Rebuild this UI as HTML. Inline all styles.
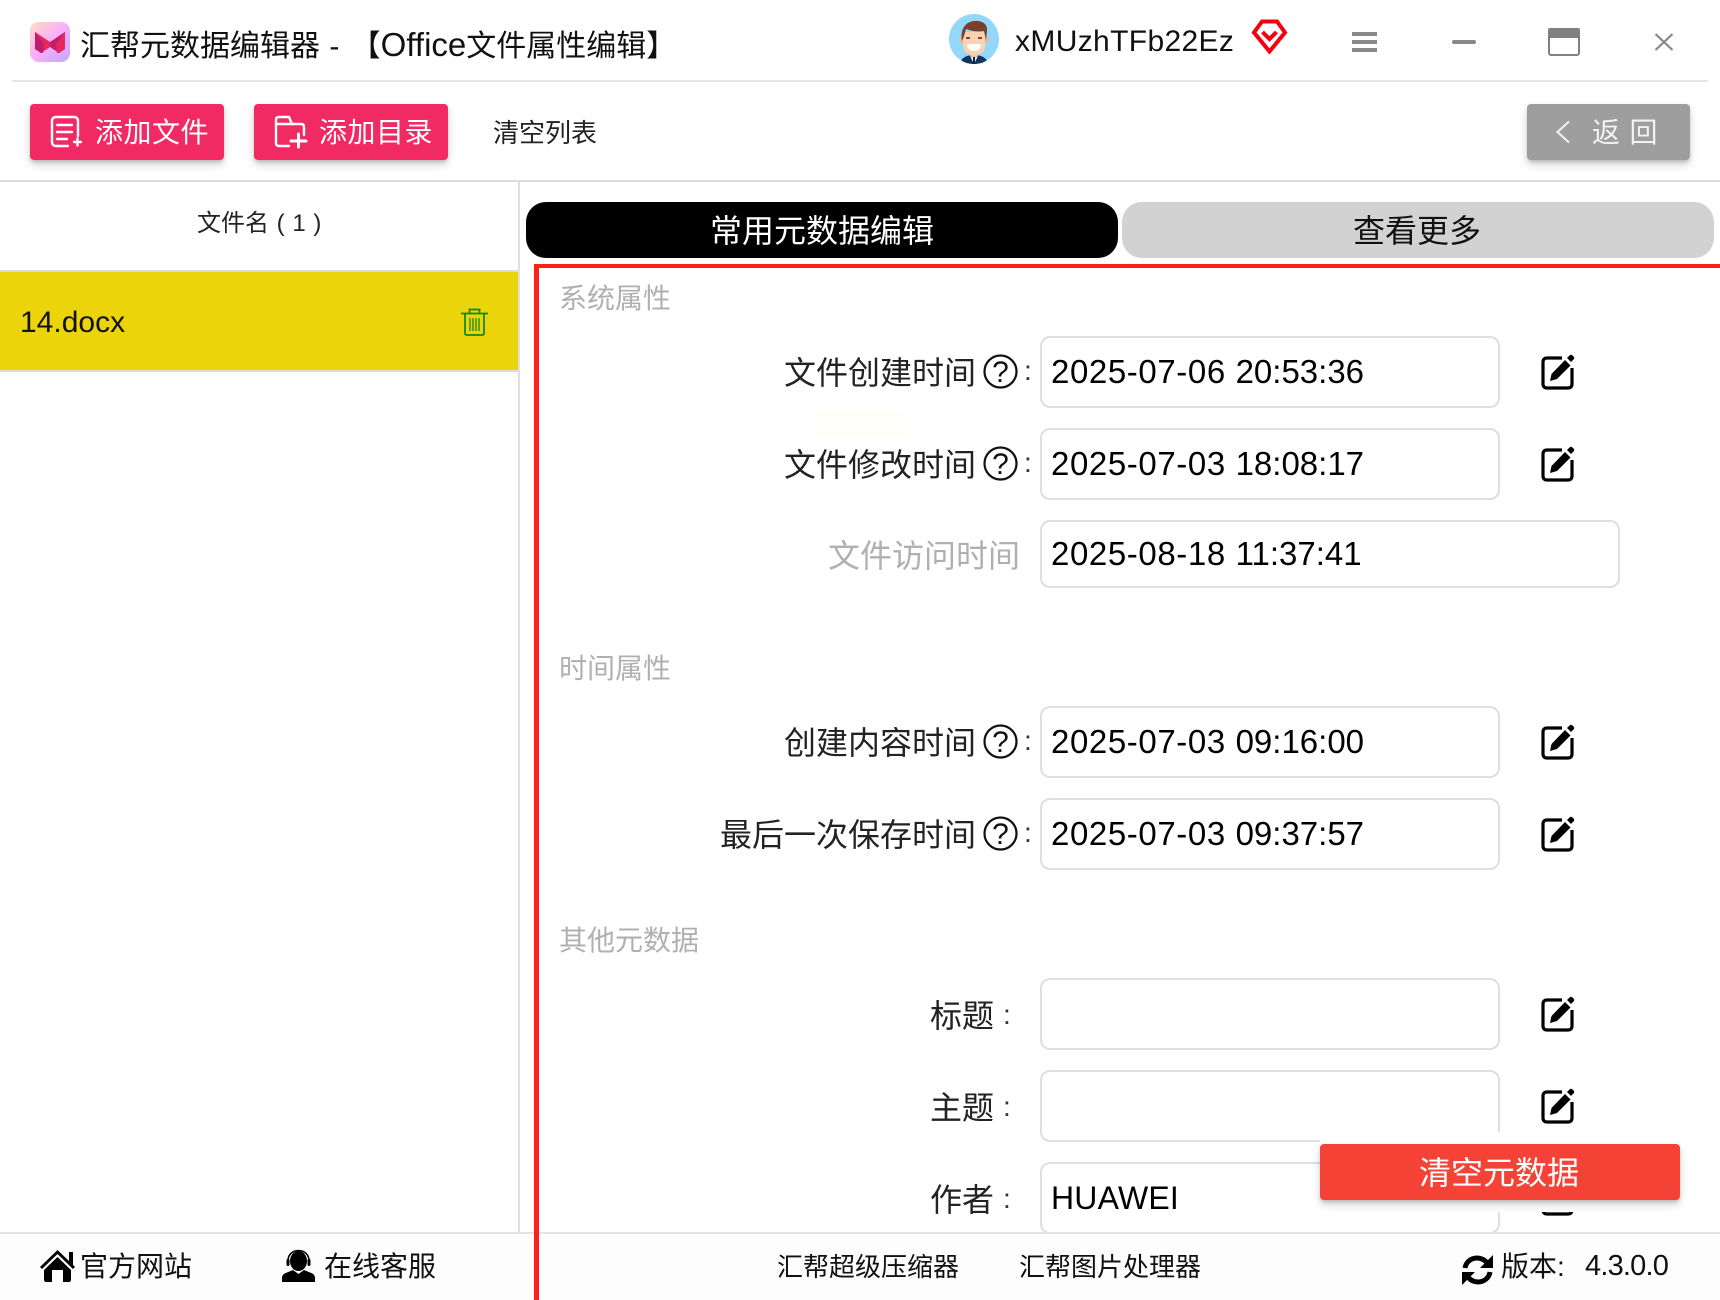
<!DOCTYPE html>
<html lang="zh-CN"><head><meta charset="utf-8"><title>汇帮元数据编辑器</title>
<style>
html,body{margin:0;padding:0;background:#fff}
#app{position:relative;width:1720px;height:1300px;overflow:hidden;background:#fff;font-family:"Liberation Sans","Noto Sans CJK SC",sans-serif;color:#111}
.a{position:absolute}
.t{position:absolute;white-space:nowrap;line-height:40px;height:40px}
.btn{position:absolute;top:104px;height:56px;border-radius:4px;background:#f22a63;box-shadow:0 3px 5px -1px rgba(0,0,0,.2),0 5px 10px rgba(0,0,0,.14)}
.inp{position:absolute;left:1040px;width:460px;height:72px;box-sizing:border-box;border:2px solid #dcdfe6;border-radius:10px;background:#fff}
.val{position:absolute;left:1051px;white-space:nowrap;font-size:33px;letter-spacing:.6px;line-height:40px;height:40px;color:#000}
.val span{letter-spacing:0}
.lab{position:absolute;right:744px;white-space:nowrap;font-size:32px;line-height:44px;height:44px;color:#222}
.sec{position:absolute;left:559px;font-size:28px;line-height:40px;height:40px;color:#b0b0b0;white-space:nowrap}
.colon{position:absolute;left:1024px;font-size:28px;line-height:40px;height:40px;color:#333}
svg{position:absolute;overflow:visible}
</style></head><body><div id="app">

<!-- title bar -->
<svg style="left:30px;top:22px" width="40" height="40" viewBox="0 0 40 40">
<defs><linearGradient id="lg" x1="0" y1="0" x2="1" y2="1"><stop offset="0" stop-color="#ffdcc4"/><stop offset=".5" stop-color="#f9aefa"/><stop offset="1" stop-color="#bfaaff"/></linearGradient></defs>
<rect width="40" height="40" rx="9" fill="url(#lg)"/>
<path d="M5 10l15 10v5l-9 6-6-4z" fill="#e8265f"/><path d="M35 10l-15 10v5l9 6 6-4z" fill="#c01e6a"/>
<path d="M5 10l9 12-1 9-2 0-6-4z" fill="#c01e6a"/><path d="M35 10l-9 12 1 9 2 0 6-4z" fill="#e8265f"/>
</svg>
<div class="t" style="left:80px;top:25px;font-size:30px;color:#111;word-spacing:1px">汇帮元数据编辑器 - <span style="margin-left:2px">【</span><span style="font-size:33px">Office</span>文件属性编辑】</div>

<svg style="left:949px;top:14px" width="50" height="50" viewBox="0 0 50 50">
<clipPath id="c"><circle cx="25" cy="25" r="25"/></clipPath>
<circle cx="25" cy="25" r="25" fill="#93d8fb"/>
<g clip-path="url(#c)">
<path d="M11 50c1-6 6-9 14-9s13 3 14 9z" fill="#12335a"/>
<path d="M20 41l5 3 5-3-2-7h-6z" fill="#f7c7a6"/><path d="M21 42l4 8 4-8-4 2z" fill="#fff"/><rect x="24" y="43" width="2" height="8" fill="#10233e"/>
<circle cx="13" cy="26" r="3" fill="#f1b48e"/><circle cx="37" cy="26" r="3" fill="#f1b48e"/>
<path d="M14 18h22v14c0 6-5 9-11 9s-11-3-11-9z" fill="#fbd2b3"/>
<path d="M13 27c-2-10 2-19 12-20 9-1 14 4 13 10l-1 9-2-9c-6 1-13 0-18-2-1 4-2 8-4 12z" fill="#7b3f2a"/>
<path d="M18 30h14c0 5-3 7-7 7s-7-2-7-7z" fill="#fff"/>
<rect x="17" y="23" width="4" height="2" fill="#7a4a36"/><rect x="29" y="23" width="4" height="2" fill="#7a4a36"/>
</g></svg>
<div class="t" style="left:1015px;top:22px;font-size:30px;letter-spacing:.35px;color:#111">xMUzhTFb22Ez</div>
<svg style="left:1252px;top:19px" width="35" height="35" viewBox="0 0 35 35" fill="none" stroke="#f4000e" stroke-width="4">
<path d="M10 2.500h15l8 11-15.500 19L2 13.500z"/><path d="M10.500 13l7 7 7-7" stroke-width="4"/></svg>

<svg style="left:1352px;top:32px" width="25" height="20"><rect width="25" height="4" fill="#888"/><rect y="8" width="25" height="4" fill="#888"/><rect y="16" width="25" height="4" fill="#888"/></svg>
<svg style="left:1452px;top:40px" width="24" height="4"><rect width="24" height="4" rx="2" fill="#888"/></svg>
<svg style="left:1548px;top:28px" width="32" height="28"><rect x="1" y="1" width="30" height="26" rx="2" fill="#fff" stroke="#808080" stroke-width="2"/><rect width="32" height="10" rx="2" fill="#808080"/></svg>
<svg style="left:1654px;top:33px" width="20" height="18" fill="none" stroke="#888" stroke-width="2.200"><path d="M1.500 1l17 16M18.500 1l-17 16"/></svg>

<div class="a" style="left:12px;top:80px;width:1696px;height:2px;background:#e6e6e6"></div>

<!-- toolbar -->
<div class="btn" style="left:30px;width:194px"></div>
<svg style="left:50px;top:116px" width="32" height="32" viewBox="0 0 32 32" fill="none" stroke="#fff" stroke-width="2.400" stroke-linecap="round">
<path d="M18 30H6c-2.500 0-4-1.500-4-4V5c0-2.500 1.500-4 4-4h18c2.500 0 4 1.500 4 4v15"/><path d="M7 9h15M7 16h15M7 23h10"/><path d="M24 26h7M27.500 22.500v7"/></svg>
<div class="t" style="left:95px;top:113px;font-size:28px;letter-spacing:.5px;color:#fff">添加文件</div>
<div class="btn" style="left:254px;width:194px"></div>
<svg style="left:274px;top:116px" width="33" height="32" viewBox="0 0 33 32" fill="none" stroke="#fff" stroke-width="2.400" stroke-linecap="round">
<path d="M15 30H5c-2 0-3-1-3-3V4c0-2 1-3 3-3h10l3 7h9c2 0 3 1 3 3v8"/><path d="M2 8h16"/><path d="M17 25h15M24.500 18v13" stroke-width="3"/></svg>
<div class="t" style="left:319px;top:113px;font-size:28px;letter-spacing:.5px;color:#fff">添加目录</div>
<div class="t" style="left:493px;top:113px;font-size:26px;color:#222">清空列表</div>

<div class="btn" style="left:1527px;width:163px;background:#9e9e9e"></div>
<svg style="left:1555px;top:120px" width="16" height="24" fill="none" stroke="#eee" stroke-width="2.200"><path d="M14 1.500L2.500 12 14 22.500"/></svg>
<div class="t" style="left:1592px;top:113px;font-size:28px;letter-spacing:9.500px;color:#f2f2f2">返回</div>

<div class="a" style="left:0;top:180px;width:1720px;height:2px;background:#dcdcdc"></div>

<!-- left panel -->
<div class="a" style="left:518px;top:182px;width:2px;height:1050px;background:#e0e0e0"></div>
<div class="t" style="left:197px;top:204px;font-size:24px;word-spacing:1px;color:#222">文件名 ( 1 )</div>
<div class="a" style="left:0;top:270px;width:518px;height:102px;box-sizing:border-box;border-top:2px solid #dcdcdc;border-bottom:2px solid #dcdcdc;background:#ecd40a"></div>
<div class="t" style="left:20px;top:303px;font-size:30px;color:#111">14.docx</div>
<svg style="left:461px;top:308px" width="27" height="28" viewBox="0 0 27 28" fill="none" stroke="#128a12" stroke-width="1.800">
<path d="M0 5.500h27M8.500 5V1.500h10V5"/><path d="M4 6v19c0 1.500 1 2 2 2h15c1 0 2-.5 2-2V6"/><path d="M9 10v13M12 10v13M15 10v13M18 10v13" stroke-width="1.300"/></svg>

<!-- tabs -->
<div class="a" style="left:526px;top:202px;width:592px;height:56px;border-radius:20px;background:#000"></div>
<div class="t" style="left:526px;top:211px;width:592px;text-align:center;font-size:32px;color:#fff">常用元数据编辑</div>
<div class="a" style="left:1122px;top:202px;width:592px;height:56px;border-radius:20px;background:#d2d2d2"></div>
<div class="t" style="left:1121px;top:211px;width:592px;text-align:center;font-size:32px;color:#111">查看更多</div>

<div class="a" style="left:815px;top:410px;width:90px;height:28px;background:#fffffa"></div>

<!-- section 1 -->
<div class="sec" style="top:279px">系统属性</div>

<div class="lab" style="top:351px">文件创建时间</div>
<svg style="left:983px;top:354px" width="35" height="35" viewBox="0 0 35 35"><circle cx="17.500" cy="17.500" r="16" fill="none" stroke="#111" stroke-width="2.200"/><text x="17.500" y="28" text-anchor="middle" font-size="30" font-family="Liberation Sans" fill="#111">?</text></svg>
<div class="colon" style="top:351px">:</div>
<div class="inp" style="top:336px"></div><div class="val" style="top:352px">2025-07-06 <span>20:53:36</span></div>
<svg class="ed" style="left:1541px;top:354px" width="33" height="35" viewBox="0 0 33 35"><path d="M21 4H6C3.500 4 2 5.500 2 8v22c0 2.500 1.500 4 4 4h21c2.500 0 4-1.500 4-4V14" fill="none" stroke="#000" stroke-width="3.200"/><path d="M9 27l1.500-7L24 6l5.500 5.500L16 25z"/><path d="M26 4l2.500-2.500c1-1 2-1 3 0l1 1c1 1 1 2 0 3L30 8z"/></svg>

<div class="lab" style="top:443px">文件修改时间</div>
<svg style="left:983px;top:446px" width="35" height="35" viewBox="0 0 35 35"><circle cx="17.500" cy="17.500" r="16" fill="none" stroke="#111" stroke-width="2.200"/><text x="17.500" y="28" text-anchor="middle" font-size="30" font-family="Liberation Sans" fill="#111">?</text></svg>
<div class="colon" style="top:443px">:</div>
<div class="inp" style="top:428px"></div><div class="val" style="top:444px">2025-07-03 <span>18:08:17</span></div>
<svg class="ed" style="left:1541px;top:446px" width="33" height="35" viewBox="0 0 33 35"><path d="M21 4H6C3.500 4 2 5.500 2 8v22c0 2.500 1.500 4 4 4h21c2.500 0 4-1.500 4-4V14" fill="none" stroke="#000" stroke-width="3.200"/><path d="M9 27l1.500-7L24 6l5.500 5.500L16 25z"/><path d="M26 4l2.500-2.500c1-1 2-1 3 0l1 1c1 1 1 2 0 3L30 8z"/></svg>

<div class="lab" style="top:534px;right:700px;color:#b0b0b0">文件访问时间</div>
<div class="inp" style="top:520px;width:580px;height:68px"></div><div class="val" style="top:534px">2025-08-18 <span>11:37:41</span></div>

<!-- section 2 -->
<div class="sec" style="top:649px">时间属性</div>

<div class="lab" style="top:721px">创建内容时间</div>
<svg style="left:983px;top:724px" width="35" height="35" viewBox="0 0 35 35"><circle cx="17.500" cy="17.500" r="16" fill="none" stroke="#111" stroke-width="2.200"/><text x="17.500" y="28" text-anchor="middle" font-size="30" font-family="Liberation Sans" fill="#111">?</text></svg>
<div class="colon" style="top:721px">:</div>
<div class="inp" style="top:706px"></div><div class="val" style="top:722px">2025-07-03 <span>09:16:00</span></div>
<svg class="ed" style="left:1541px;top:724px" width="33" height="35" viewBox="0 0 33 35"><path d="M21 4H6C3.500 4 2 5.500 2 8v22c0 2.500 1.500 4 4 4h21c2.500 0 4-1.500 4-4V14" fill="none" stroke="#000" stroke-width="3.200"/><path d="M9 27l1.500-7L24 6l5.500 5.500L16 25z"/><path d="M26 4l2.500-2.500c1-1 2-1 3 0l1 1c1 1 1 2 0 3L30 8z"/></svg>

<div class="lab" style="top:813px">最后一次保存时间</div>
<svg style="left:983px;top:816px" width="35" height="35" viewBox="0 0 35 35"><circle cx="17.500" cy="17.500" r="16" fill="none" stroke="#111" stroke-width="2.200"/><text x="17.500" y="28" text-anchor="middle" font-size="30" font-family="Liberation Sans" fill="#111">?</text></svg>
<div class="colon" style="top:813px">:</div>
<div class="inp" style="top:798px"></div><div class="val" style="top:814px">2025-07-03 <span>09:37:57</span></div>
<svg class="ed" style="left:1541px;top:816px" width="33" height="35" viewBox="0 0 33 35"><path d="M21 4H6C3.500 4 2 5.500 2 8v22c0 2.500 1.500 4 4 4h21c2.500 0 4-1.500 4-4V14" fill="none" stroke="#000" stroke-width="3.200"/><path d="M9 27l1.500-7L24 6l5.500 5.500L16 25z"/><path d="M26 4l2.500-2.500c1-1 2-1 3 0l1 1c1 1 1 2 0 3L30 8z"/></svg>

<!-- section 3 -->
<div class="sec" style="top:921px">其他元数据</div>

<div class="lab" style="top:994px;right:726px">标题</div><div class="colon" style="top:995px;left:1003px">:</div>
<div class="inp" style="top:978px"></div>
<svg class="ed" style="left:1541px;top:996px" width="33" height="35" viewBox="0 0 33 35"><path d="M21 4H6C3.500 4 2 5.500 2 8v22c0 2.500 1.500 4 4 4h21c2.500 0 4-1.500 4-4V14" fill="none" stroke="#000" stroke-width="3.200"/><path d="M9 27l1.500-7L24 6l5.500 5.500L16 25z"/><path d="M26 4l2.500-2.500c1-1 2-1 3 0l1 1c1 1 1 2 0 3L30 8z"/></svg>

<div class="lab" style="top:1086px;right:726px">主题</div><div class="colon" style="top:1087px;left:1003px">:</div>
<div class="inp" style="top:1070px"></div>
<svg class="ed" style="left:1541px;top:1088px" width="33" height="35" viewBox="0 0 33 35"><path d="M21 4H6C3.500 4 2 5.500 2 8v22c0 2.500 1.500 4 4 4h21c2.500 0 4-1.500 4-4V14" fill="none" stroke="#000" stroke-width="3.200"/><path d="M9 27l1.500-7L24 6l5.500 5.500L16 25z"/><path d="M26 4l2.500-2.500c1-1 2-1 3 0l1 1c1 1 1 2 0 3L30 8z"/></svg>

<div class="lab" style="top:1178px;right:726px">作者</div><div class="colon" style="top:1179px;left:1003px">:</div>
<div class="inp" style="top:1162px"></div><div class="val" style="top:1178px;font-size:32px;letter-spacing:.2px">HUAWEI</div>
<svg class="ed" style="left:1541px;top:1180px" width="33" height="35" viewBox="0 0 33 35"><path d="M21 4H6C3.500 4 2 5.500 2 8v22c0 2.500 1.500 4 4 4h21c2.500 0 4-1.500 4-4V14" fill="none" stroke="#000" stroke-width="3.200"/><path d="M9 27l1.500-7L24 6l5.500 5.500L16 25z"/><path d="M26 4l2.500-2.500c1-1 2-1 3 0l1 1c1 1 1 2 0 3L30 8z"/></svg>

<!-- clear button -->
<div class="a" style="left:1320px;top:1132px;width:360px;height:80px;background:#fff"></div>
<div class="a" style="left:1320px;top:1144px;width:360px;height:56px;border-radius:4px;background:#f44336;box-shadow:0 3px 5px -1px rgba(0,0,0,.2),0 5px 10px rgba(0,0,0,.14)"></div>
<div class="t" style="left:1319px;top:1153px;width:360px;text-align:center;font-size:32px;color:#fff">清空元数据</div>

<!-- footer -->
<div class="a" style="left:0;top:1232px;width:1720px;height:68px;background:#fdfdfd;border-top:2px solid #e4e4e4;box-sizing:border-box"></div>
<svg style="left:40px;top:1250px" width="35" height="32" viewBox="0 0 35 32">
<path d="M0 17L17.500 0 29 11V2h4v13l2 2-2 2L17.500 4 2 19z"/><path d="M4 20L17.500 7 31 20v10c0 1-1 2-2 2h-6V20H12v12H6c-1 0-2-1-2-2z"/></svg>
<div class="t" style="left:80px;top:1247px;font-size:28px;color:#111">官方网站</div>
<svg style="left:282px;top:1250px" width="33" height="32" viewBox="0 0 33 32">
<ellipse cx="16.500" cy="11" rx="8.500" ry="10"/><path d="M6 15V11C6 4.500 10.500.5 16.500.5S27 4.500 27 11v4" fill="none" stroke="#000" stroke-width="1.600"/><rect x="4.500" y="9" width="3" height="7" rx="1.500"/><rect x="25.500" y="9" width="3" height="7" rx="1.500"/>
<path d="M0 32v-4c0-3 2-4.500 5-5.500l6-2.500 5.500 4 5.500-4 6 2.500c3 1 5 2.500 5 5.500v4z"/></svg>
<div class="t" style="left:324px;top:1247px;font-size:28px;color:#111">在线客服</div>
<div class="t" style="left:777px;top:1247px;font-size:26px;color:#111">汇帮超级压缩器</div>
<div class="t" style="left:1019px;top:1247px;font-size:26px;color:#111">汇帮图片处理器</div>
<svg style="left:1462px;top:1255px" width="31" height="30" viewBox="0 0 31 30" fill="none" stroke="#000" stroke-width="5">
<path d="M3 13C4 7 9 3 15 3c4 0 8 2 10 5"/><path d="M28 17c-1 6-6 10-12 10-4 0-8-2-10-5"/>
<path d="M31 0v13H18z" fill="#000" stroke="none"/><path d="M0 30V17h13z" fill="#000" stroke="none"/></svg>
<div class="t" style="left:1501px;top:1247px;font-size:28px;color:#111">版本:</div>
<div class="t" style="left:1585px;top:1246px;font-size:29px;letter-spacing:-.8px;color:#111">4.3.0.0</div>

<!-- red frame -->
<div class="a" style="left:534px;top:264px;width:1186px;height:4px;background:#ff2018"></div>
<div class="a" style="left:534px;top:264px;width:5px;height:1036px;background:#ff2018"></div>
</div></body></html>
